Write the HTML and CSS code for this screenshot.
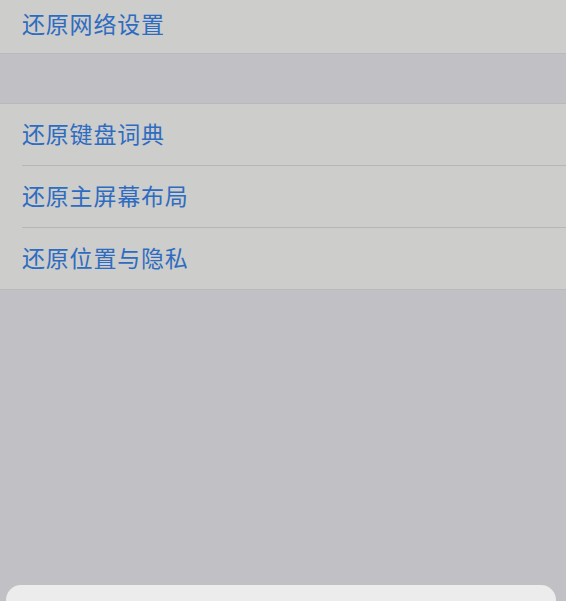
FILE: index.html
```html
<!DOCTYPE html>
<html lang="zh-CN">
<head>
    <meta charset="UTF-8">
    <meta name="viewport" content="width=device-width, initial-scale=1.0">
    <title>还原</title>
    <link rel="stylesheet" href="styles.css">
</head>
<body>
    <div class="page">
        <ul class="group group-top">
            <li class="row">还原网络设置</li>
        </ul>

        <ul class="group">
            <li class="row">还原键盘词典</li>
            <li class="row">还原主屏幕布局</li>
            <li class="row">还原位置与隐私</li>
        </ul>

        <div class="sheet"></div>
    </div>
</body>
</html>
```

FILE: styles.css
```css
body {
    margin: 0;
    padding: 0;
    background-color: #c1c0c5; /* dimmed grouped background */
    font-family: "Noto Sans CJK SC", "Noto Sans", sans-serif;
    overflow: hidden;
}
.page {
    height: 601px;
    display: flex;
    flex-direction: column;
}
.group {
    list-style: none;
    margin: 0;
    padding: 0;
    background-color: #cdcdcc;
    border-top: 1px solid #b9b9bb;
    border-bottom: 1px solid #b9b9bb;
}
.group-top {
    border-top: none;
    margin-bottom: 49px;
}
.row {
    height: 62px;
    margin-left: 22px;
    display: flex;
    align-items: center;
    color: #2d6cc0;
    font-size: 23px;
    letter-spacing: 0.8px;
    border-bottom: 1px solid #b7b7b8;
    padding-bottom: 3px;
    box-sizing: border-box;
}
.row:last-child {
    height: 61px;
    border-bottom: none;
}
.group-top .row {
    height: 53px;
    padding-bottom: 8px;
}
.sheet {
    margin: auto 10px 0 6px;
    height: 16px;
    background-color: #ececec;
    border-radius: 15px 15px 0 0;
}
```
